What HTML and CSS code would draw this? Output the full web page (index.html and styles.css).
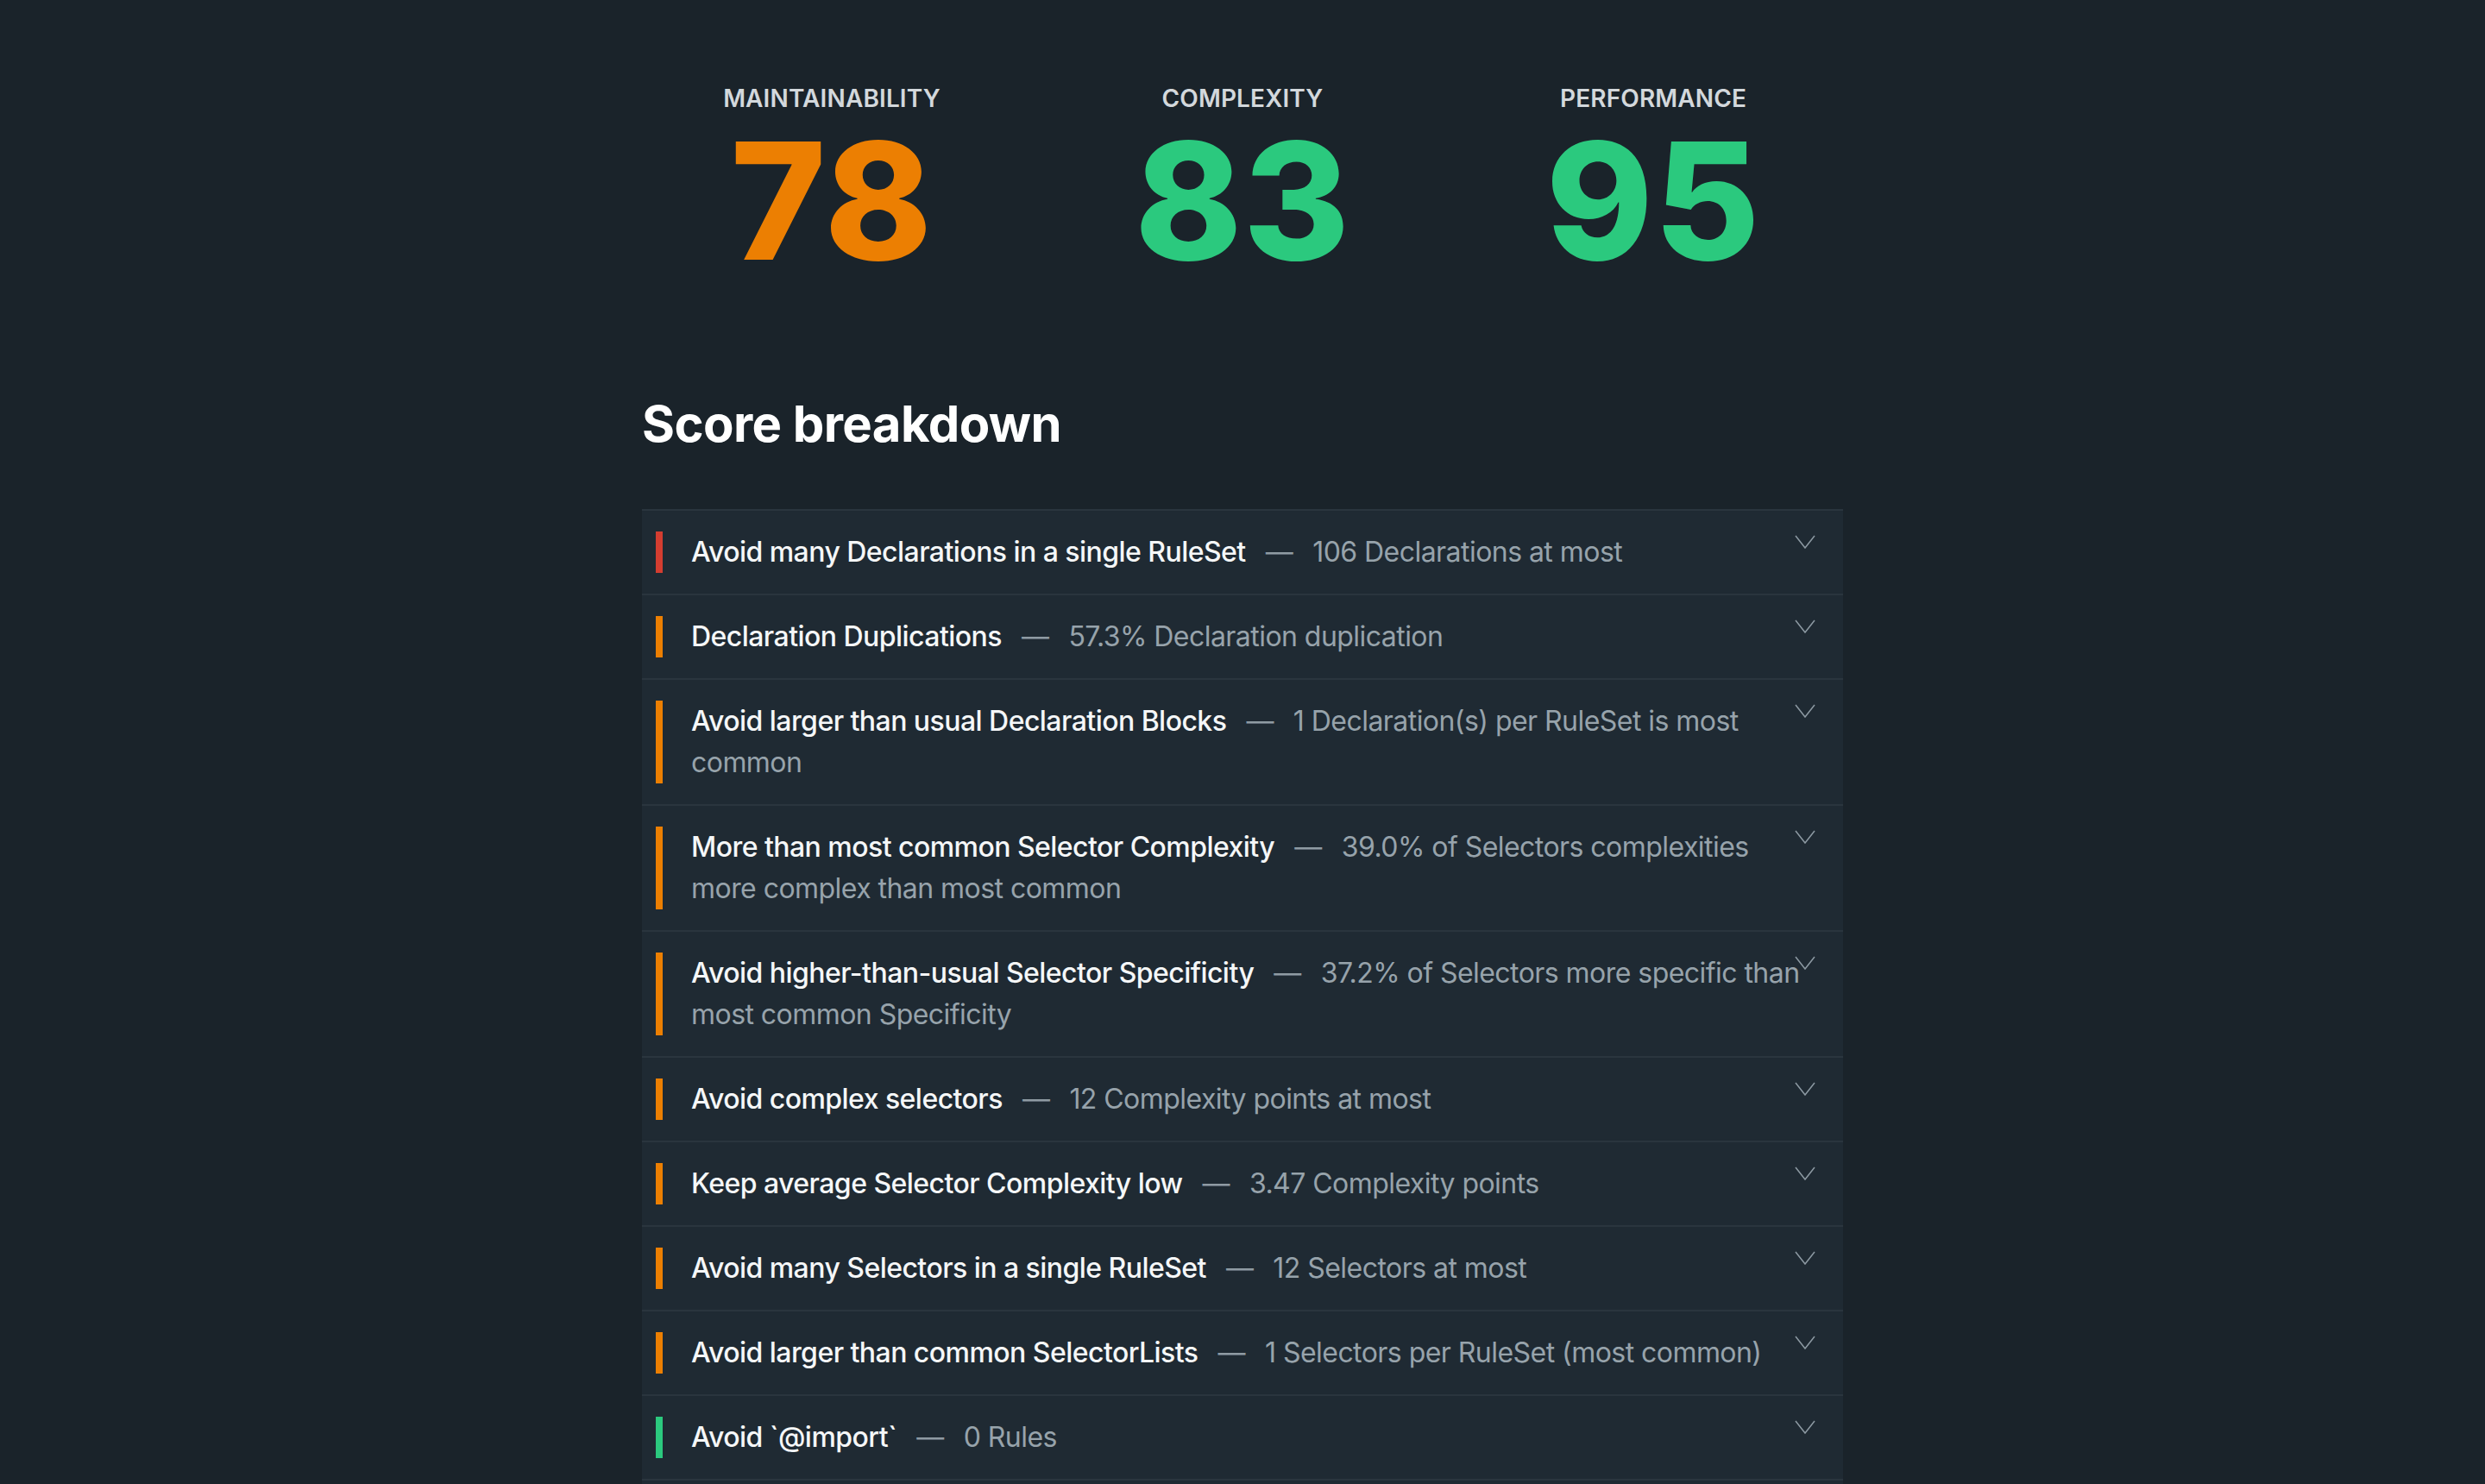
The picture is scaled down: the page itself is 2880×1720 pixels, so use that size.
FILE: index.html
```html
<!DOCTYPE html>
<html lang="en">
<head>
<meta charset="utf-8">
<title>CSS Analyzer – Scores</title>
<link rel="stylesheet" href="styles.css">
</head>
<body>
<main class="page">
  <section class="scores">
    <div class="score">
      <h3 class="score-label">Maintainability</h3>
      <p class="score-value score-value--warn">78</p>
    </div>
    <div class="score">
      <h3 class="score-label">Complexity</h3>
      <p class="score-value score-value--good">83</p>
    </div>
    <div class="score">
      <h3 class="score-label">Performance</h3>
      <p class="score-value score-value--good">95</p>
    </div>
  </section>

  <h2 class="section-title">Score breakdown</h2>

  <ul class="breakdown">
    <li class="item">
      <span class="indicator indicator--bad"></span>
      <p class="item-text"><span class="item-title">Avoid many Declarations in a single RuleSet</span><span class="dash">—</span><span class="item-desc">106 Declarations at most</span></p>
      <svg class="chevron" viewBox="0 0 24 16"><polyline points="1,1 12,15 23,1"/></svg>
    </li>
    <li class="item">
      <span class="indicator indicator--warn"></span>
      <p class="item-text"><span class="item-title">Declaration Duplications</span><span class="dash">—</span><span class="item-desc">57.3% Declaration duplication</span></p>
      <svg class="chevron" viewBox="0 0 24 16"><polyline points="1,1 12,15 23,1"/></svg>
    </li>
    <li class="item">
      <span class="indicator indicator--warn"></span>
      <p class="item-text"><span class="item-title">Avoid larger than usual Declaration Blocks</span><span class="dash">—</span><span class="item-desc">1 Declaration(s) per RuleSet is most common</span></p>
      <svg class="chevron" viewBox="0 0 24 16"><polyline points="1,1 12,15 23,1"/></svg>
    </li>
    <li class="item">
      <span class="indicator indicator--warn"></span>
      <p class="item-text"><span class="item-title">More than most common Selector Complexity</span><span class="dash">—</span><span class="item-desc">39.0% of Selectors complexities more complex than most common</span></p>
      <svg class="chevron" viewBox="0 0 24 16"><polyline points="1,1 12,15 23,1"/></svg>
    </li>
    <li class="item">
      <span class="indicator indicator--warn"></span>
      <p class="item-text"><span class="item-title">Avoid higher-than-usual Selector Specificity</span><span class="dash">—</span><span class="item-desc">37.2% of Selectors more specific than most common Specificity</span></p>
      <svg class="chevron" viewBox="0 0 24 16"><polyline points="1,1 12,15 23,1"/></svg>
    </li>
    <li class="item">
      <span class="indicator indicator--warn"></span>
      <p class="item-text"><span class="item-title">Avoid complex selectors</span><span class="dash">—</span><span class="item-desc">12 Complexity points at most</span></p>
      <svg class="chevron" viewBox="0 0 24 16"><polyline points="1,1 12,15 23,1"/></svg>
    </li>
    <li class="item">
      <span class="indicator indicator--warn"></span>
      <p class="item-text"><span class="item-title">Keep average Selector Complexity low</span><span class="dash">—</span><span class="item-desc">3.47 Complexity points</span></p>
      <svg class="chevron" viewBox="0 0 24 16"><polyline points="1,1 12,15 23,1"/></svg>
    </li>
    <li class="item">
      <span class="indicator indicator--warn"></span>
      <p class="item-text"><span class="item-title">Avoid many Selectors in a single RuleSet</span><span class="dash">—</span><span class="item-desc">12 Selectors at most</span></p>
      <svg class="chevron" viewBox="0 0 24 16"><polyline points="1,1 12,15 23,1"/></svg>
    </li>
    <li class="item">
      <span class="indicator indicator--warn"></span>
      <p class="item-text"><span class="item-title">Avoid larger than common SelectorLists</span><span class="dash">—</span><span class="item-desc">1 Selectors per RuleSet (most common)</span></p>
      <svg class="chevron" viewBox="0 0 24 16"><polyline points="1,1 12,15 23,1"/></svg>
    </li>
    <li class="item">
      <span class="indicator indicator--good"></span>
      <p class="item-text"><span class="item-title">Avoid `@import`</span><span class="dash">—</span><span class="item-desc">0 Rules</span></p>
      <svg class="chevron" viewBox="0 0 24 16"><polyline points="1,1 12,15 23,1"/></svg>
    </li>
    <li class="item">
      <span class="indicator indicator--good"></span>
      <p class="item-text"><span class="item-title">Avoid empty rules</span><span class="dash">—</span><span class="item-desc">0 empty rules</span></p>
      <svg class="chevron" viewBox="0 0 24 16"><polyline points="1,1 12,15 23,1"/></svg>
    </li>
  </ul>
</main>
</body>
</html>
```

FILE: styles.css
```css
* {
  box-sizing: border-box;
}

html,
body {
  margin: 0;
  padding: 0;
  background: #1a232a;
}

body {
  font-family: Inter, "Noto Sans", "Liberation Sans", sans-serif;
  color: #f2f4f5;
  height: 1720px;
  overflow: hidden;
}

.page {
  width: 1392px;
  margin: 0 auto;
  padding-top: 98px;
}

.scores {
  display: grid;
  grid-template-columns: repeat(3, 1fr);
  column-gap: 36px;
  text-align: center;
}

.score-label {
  margin: 0;
  font-size: 28px;
  line-height: 32px;
  font-weight: 600;
  letter-spacing: 0.005em;
  text-transform: uppercase;
  color: #d3d8dc;
}

.score-value {
  margin: 9px 0 0;
  font-size: 188px;
  line-height: 188px;
  font-weight: 800;
  letter-spacing: 0.005em;
}

.score-value--warn {
  color: #ec7f02;
}

.score-value--good {
  color: #2bc97e;
}

.section-title {
  margin: 129px 0 0;
  font-size: 58px;
  line-height: 70px;
  font-weight: 700;
  letter-spacing: -0.01em;
  color: #ffffff;
}

.breakdown {
  list-style: none;
  margin: 64px 0 0;
  padding: 0;
}

.item {
  display: flex;
  align-items: flex-start;
  padding: 24px 32px 24px 16px;
  background: #1f2a33;
  border-top: 2px solid #2a353e;
}

.indicator {
  flex: none;
  align-self: stretch;
  width: 8px;
  margin-right: 33px;
}

.indicator--bad {
  background: #d43d30;
}

.indicator--warn {
  background: #ec7f02;
}

.indicator--good {
  background: #2bc97e;
}

.item-text {
  flex: 1;
  margin: 0 -6px 0 0;
  font-size: 32px;
  line-height: 48px;
  letter-spacing: -0.017em;
}

.item-title {
  font-weight: 500;
  color: #f5f7f8;
}

.dash {
  margin: 0 23px;
  color: #8f9ba3;
}

.item-desc {
  color: #97a3ab;
}

.chevron {
  flex: none;
  width: 24px;
  height: 16px;
  margin-top: 4px;
  fill: none;
  stroke: #8d9aa3;
  stroke-width: 1.5;
}
```
